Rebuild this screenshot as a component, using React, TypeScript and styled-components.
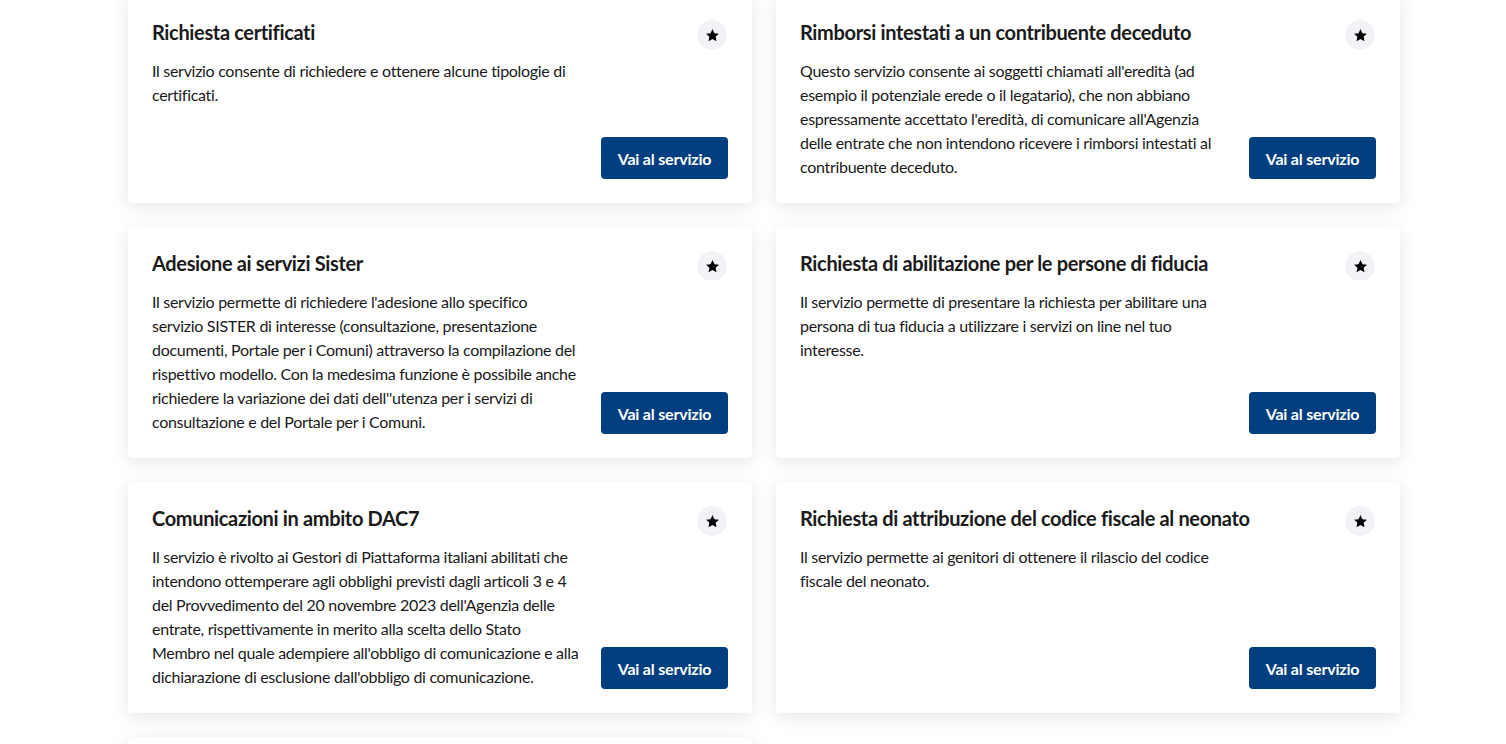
import { createGlobalStyle, styled } from "styled-components";

const GlobalStyle = createGlobalStyle`
    html, body {
        margin: 0;
        padding: 0;
        background: #ffffff;
        font-family: Lato, "Open Sans", sans-serif;
        color: #1a1a1a;
        overflow: hidden;
    }
`

const Page = styled.main`
    padding: 0 106px 40px 128px;
`

const ServiceGrid = styled.section`
    display: grid;
    grid-template-columns: repeat(2, 624px);
    column-gap: 24px;
    row-gap: 24px;
    margin-top: -4px;
`

const Card = styled.article`
    background: #ffffff;
    border-radius: 4px;
    box-shadow: 0 4px 18px rgba(0, 0, 0, 0.1);

    display: flex;
    flex-direction: column;

    padding: 24px;
`

const CardHeader = styled.header`
    display: flex;
    justify-content: space-between;
    align-items: flex-start;
    gap: 16px;
    height: 30px;
`

const CardTitle = styled.h3`
    margin: 0;
    font-size: 20px;
    font-weight: 700;
    line-height: 24px;
    letter-spacing: -0.35px;
    color: #1a1a1a;
`

const FavouriteButton = styled.button`
    flex: 0 0 30px;
    width: 30px;
    height: 30px;
    margin-right: 1px;
    border: none;
    border-radius: 50%;
    background: #f1f3f6;

    display: flex;
    justify-content: center;
    align-items: center;
    padding: 0;
    cursor: pointer;
`

const CardBody = styled.div`
    flex: 1;
    display: flex;
    justify-content: space-between;
    align-items: flex-end;
    gap: 20px;
    margin-top: 9px;
`

const Description = styled.p`
    flex: 1;
    min-width: 0;
    margin: 0;
    align-self: flex-start;
    font-size: 16px;
    line-height: 24px;
    letter-spacing: -0.3px;
    white-space: nowrap;
    color: #1a1a1a;
`

const GoButton = styled.a`
    flex: 0 0 127px;
    width: 127px;
    height: 42px;
    box-sizing: border-box;
    border-radius: 4px;
    background: #003f7f;
    color: #ffffff;

    display: flex;
    justify-content: center;
    align-items: center;

    font-size: 16px;
    font-weight: 700;
    letter-spacing: -0.2px;
    text-decoration: none;
    cursor: pointer;
`

const StarIcon = () => (
    <svg width="15" height="15" viewBox="0 0 24 24" aria-hidden="true">
        <path
            fill="#000"
            d="M12 1.6l3.1 6.6 7.2.9-5.3 5 1.4 7.1L12 17.7l-6.4 3.5L7 14.1l-5.3-5 7.2-.9z"
        />
    </svg>
)

type Service = { title: string, lines: string[] }

const services: Service[] = [
    {
        title: "Richiesta certificati",
        lines: [
            "Il servizio consente di richiedere e ottenere alcune tipologie di",
            "certificati.",
        ],
    },
    {
        title: "Rimborsi intestati a un contribuente deceduto",
        lines: [
            "Questo servizio consente ai soggetti chiamati all'eredità (ad",
            "esempio il potenziale erede o il legatario), che non abbiano",
            "espressamente accettato l'eredità, di comunicare all'Agenzia",
            "delle entrate che non intendono ricevere i rimborsi intestati al",
            "contribuente deceduto.",
        ],
    },
    {
        title: "Adesione ai servizi Sister",
        lines: [
            "Il servizio permette di richiedere l'adesione allo specifico",
            "servizio SISTER di interesse (consultazione, presentazione",
            "documenti, Portale per i Comuni) attraverso la compilazione del",
            "rispettivo modello. Con la medesima funzione è possibile anche",
            "richiedere la variazione dei dati dell''utenza per i servizi di",
            "consultazione e del Portale per i Comuni.",
        ],
    },
    {
        title: "Richiesta di abilitazione per le persone di fiducia",
        lines: [
            "Il servizio permette di presentare la richiesta per abilitare una",
            "persona di tua fiducia a utilizzare i servizi on line nel tuo",
            "interesse.",
        ],
    },
    {
        title: "Comunicazioni in ambito DAC7",
        lines: [
            "Il servizio è rivolto ai Gestori di Piattaforma italiani abilitati che",
            "intendono ottemperare agli obblighi previsti dagli articoli 3 e 4",
            "del Provvedimento del 20 novembre 2023 dell'Agenzia delle",
            "entrate, rispettivamente in merito alla scelta dello Stato",
            "Membro nel quale adempiere all'obbligo di comunicazione e alla",
            "dichiarazione di esclusione dall'obbligo di comunicazione.",
        ],
    },
    {
        title: "Richiesta di attribuzione del codice fiscale al neonato",
        lines: [
            "Il servizio permette ai genitori di ottenere il rilascio del codice",
            "fiscale del neonato.",
        ],
    },
    {
        title: "Registrazione contratti di locazione",
        lines: [
            "Il servizio consente di registrare i contratti di locazione e di",
            "comodato di beni immobili.",
        ],
    },
]

const ServiceCard = ({ service }: { service: Service }) => {
    return (
        <Card>
            <CardHeader>
                <CardTitle>{service.title}</CardTitle>
                <FavouriteButton aria-label="Aggiungi ai preferiti">
                    <StarIcon />
                </FavouriteButton>
            </CardHeader>
            <CardBody>
                <Description>
                    {service.lines.map((line, i) => (
                        <span key={i}>
                            {line}
                            {i < service.lines.length - 1 && <br />}
                        </span>
                    ))}
                </Description>
                <GoButton>Vai al servizio</GoButton>
            </CardBody>
        </Card>
    );
}

const App = () => {
    return (
        <>
            <GlobalStyle />
            <Page>
                <ServiceGrid>
                    {services.map(service => (
                        <ServiceCard key={service.title} service={service} />
                    ))}
                </ServiceGrid>
            </Page>
        </>
    );
}

export default App;
